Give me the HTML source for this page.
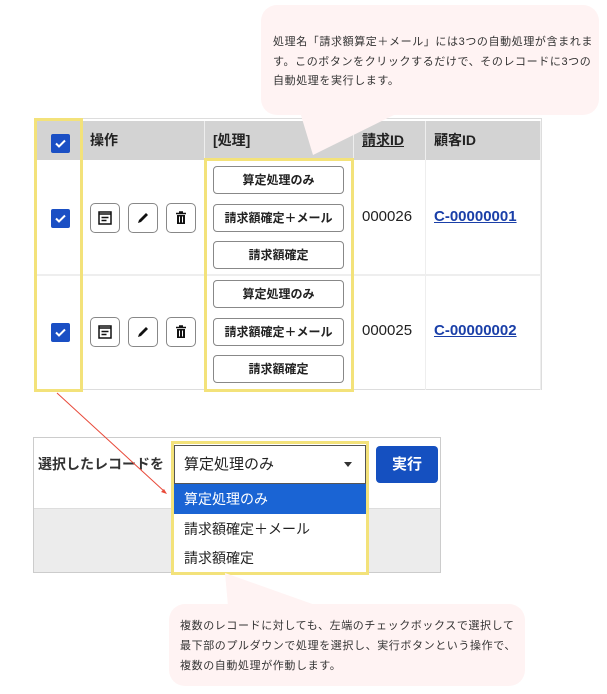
<!DOCTYPE html>
<html><head><meta charset="utf-8"><style>
*{box-sizing:border-box;margin:0;padding:0}
body{width:607px;height:694px;background:#fff;position:relative;overflow:hidden;font-family:"Liberation Sans","Noto Sans CJK JP",sans-serif;color:#222}
.abs{position:absolute}
.bub{background:#fff3f3;border-radius:16px;font-size:11px;color:#333;line-height:19.5px;letter-spacing:0.6px;white-space:nowrap}
.hd{background:#d3d3d3;font-weight:bold;font-size:14px;line-height:39px}
.pb{width:131px;height:28px;border:1px solid #888;border-radius:4px;background:#fff;font-weight:bold;font-size:12px;text-align:center;line-height:26px}
.ib{width:30px;height:30px;border:1px solid #888;border-radius:5px;background:#fff;display:flex;align-items:center;justify-content:center}
.yl{border:3px solid #f3e27a}
.opt{font-size:14px;line-height:30px;padding-left:10px;width:192px;left:174px}
</style></head><body>
<div class="abs bub" style="left:261px;top:5px;width:338px;height:110px;padding:28px 0 0 12px">処理名「請求額算定＋メール」には3つの自動処理が含まれま<br>す。このボタンをクリックするだけで、そのレコードに3つの<br>自動処理を実行します。</div>

<div class="abs" style="left:35px;top:118px;width:507px;height:272px;border:1px solid #ddd;background:#fff"></div>
<div class="abs hd" style="left:36px;top:121px;width:504px;height:39px"></div>
<div class="abs hd" style="left:90px;top:121px">操作</div>
<div class="abs hd" style="left:213px;top:121px">[処理]</div>
<div class="abs hd" style="left:362px;top:121px;text-decoration:underline">請求ID</div>
<div class="abs hd" style="left:434px;top:121px">顧客ID</div>
<div class="abs" style="left:82px;top:121px;width:1px;height:269px;background:#eee"></div>
<div class="abs" style="left:204px;top:121px;width:1px;height:269px;background:#eee"></div>
<div class="abs" style="left:353px;top:121px;width:1px;height:269px;background:#eee"></div>
<div class="abs" style="left:425px;top:121px;width:1px;height:269px;background:#eee"></div>
<div class="abs" style="left:540px;top:121px;width:1px;height:269px;background:#eee"></div>
<div class="abs" style="left:36px;top:274px;width:504px;height:2px;background:#eee"></div>

<svg class="abs" style="left:0;top:0" width="607" height="694">
<defs><symbol id="ck" viewBox="0 0 19 19"><rect width="19" height="19" rx="2" fill="#1a4fc4"/><path d="M5 9.5l3 3 6-6" stroke="#fff" stroke-width="2" fill="none"/></symbol></defs>
<use href="#ck" x="51" y="134" width="19" height="19"/>
<use href="#ck" x="51" y="209" width="19" height="19"/>
<use href="#ck" x="51" y="323" width="19" height="19"/>
</svg>

<div class="abs" style="left:90px;top:203px;display:flex;gap:8px">
<div class="ib"><svg width="14" height="14"><rect x="1" y="1" width="12" height="12" fill="none" stroke="#111" stroke-width="1.5"/><path d="M1 3h12M3.5 6.5h7M3.5 9.5h5" stroke="#111" stroke-width="1.5"/></svg></div>
<div class="ib"><svg width="14" height="14"><path d="M2 12l1-3 7-7 2 2-7 7z" fill="#111"/></svg></div>
<div class="ib"><svg width="14" height="14"><path d="M2 2.5h10M5 1h4" stroke="#111" stroke-width="1.5"/><rect x="3" y="4" width="8" height="9" fill="#111"/><path d="M5.5 5.5v6M8.5 5.5v6" stroke="#fff" stroke-width="1"/></svg></div>
</div>
<div class="abs" style="left:90px;top:317px;display:flex;gap:8px">
<div class="ib"><svg width="14" height="14"><rect x="1" y="1" width="12" height="12" fill="none" stroke="#111" stroke-width="1.5"/><path d="M1 3h12M3.5 6.5h7M3.5 9.5h5" stroke="#111" stroke-width="1.5"/></svg></div>
<div class="ib"><svg width="14" height="14"><path d="M2 12l1-3 7-7 2 2-7 7z" fill="#111"/></svg></div>
<div class="ib"><svg width="14" height="14"><path d="M2 2.5h10M5 1h4" stroke="#111" stroke-width="1.5"/><rect x="3" y="4" width="8" height="9" fill="#111"/><path d="M5.5 5.5v6M8.5 5.5v6" stroke="#fff" stroke-width="1"/></svg></div>
</div>

<div class="abs pb" style="left:213px;top:166px">算定処理のみ</div>
<div class="abs pb" style="left:213px;top:204px">請求額確定＋メール</div>
<div class="abs pb" style="left:213px;top:241px">請求額確定</div>
<div class="abs pb" style="left:213px;top:280px">算定処理のみ</div>
<div class="abs pb" style="left:213px;top:318px">請求額確定＋メール</div>
<div class="abs pb" style="left:213px;top:355px">請求額確定</div>

<div class="abs" style="left:362px;top:208px;font-size:15px">000026</div>
<div class="abs" style="left:362px;top:322px;font-size:15px">000025</div>
<div class="abs" style="left:434px;top:208px;font-size:15px;font-weight:bold;color:#1a3fa8;text-decoration:underline">C-00000001</div>
<div class="abs" style="left:434px;top:322px;font-size:15px;font-weight:bold;color:#1a3fa8;text-decoration:underline">C-00000002</div>

<div class="abs yl" style="left:34px;top:118px;width:49px;height:274px"></div>
<div class="abs yl" style="left:204px;top:158px;width:150px;height:234px"></div>

<div class="abs" style="left:33px;top:437px;width:408px;height:136px;border:1px solid #ccc;background:#fff"></div>
<div class="abs" style="left:34px;top:508px;width:406px;height:64px;background:#ececec;border-top:1px solid #ddd"></div>
<div class="abs" style="left:38px;top:454px;font-size:14px;font-weight:bold;color:#333">選択したレコードを</div>
<div class="abs" style="left:174px;top:445px;width:192px;height:39px;border:1px solid #555;background:#fff;font-size:15px;line-height:37px;padding-left:9px">算定処理のみ<span style="position:absolute;right:13px;top:16px;border:4px solid transparent;border-top:5px solid #333"></span></div>
<div class="abs opt" style="top:484px;background:#1a64d4;color:#fff">算定処理のみ</div>
<div class="abs opt" style="top:514px;background:#fff">請求額確定＋メール</div>
<div class="abs opt" style="top:543px;background:#fff;height:29px">請求額確定</div>
<div class="abs yl" style="left:171px;top:441px;width:198px;height:134px"></div>
<div class="abs" style="left:376px;top:446px;width:62px;height:37px;background:#1550c0;border-radius:4px;color:#fff;font-weight:bold;font-size:15px;text-align:center;line-height:37px">実行</div>

<svg class="abs" style="left:0;top:0" width="607" height="694">
<path d="M300 112 L313 155 L400 112Z" fill="#fff3f3"/>
<path d="M228 606 L225 573 L318 606Z" fill="#fff3f3"/>
<path d="M57 393 L165 492" stroke="#e84a3a" stroke-width="1"/>
<path d="M167 494 l-6-2 3-3z" fill="#e84a3a"/>
</svg>

<div class="abs bub" style="left:169px;top:604px;width:356px;height:82px;padding:12px 0 0 11px;line-height:20px">複数のレコードに対しても、左端のチェックボックスで選択して<br>最下部のプルダウンで処理を選択し、実行ボタンという操作で、<br>複数の自動処理が作動します。</div>
</body></html>
